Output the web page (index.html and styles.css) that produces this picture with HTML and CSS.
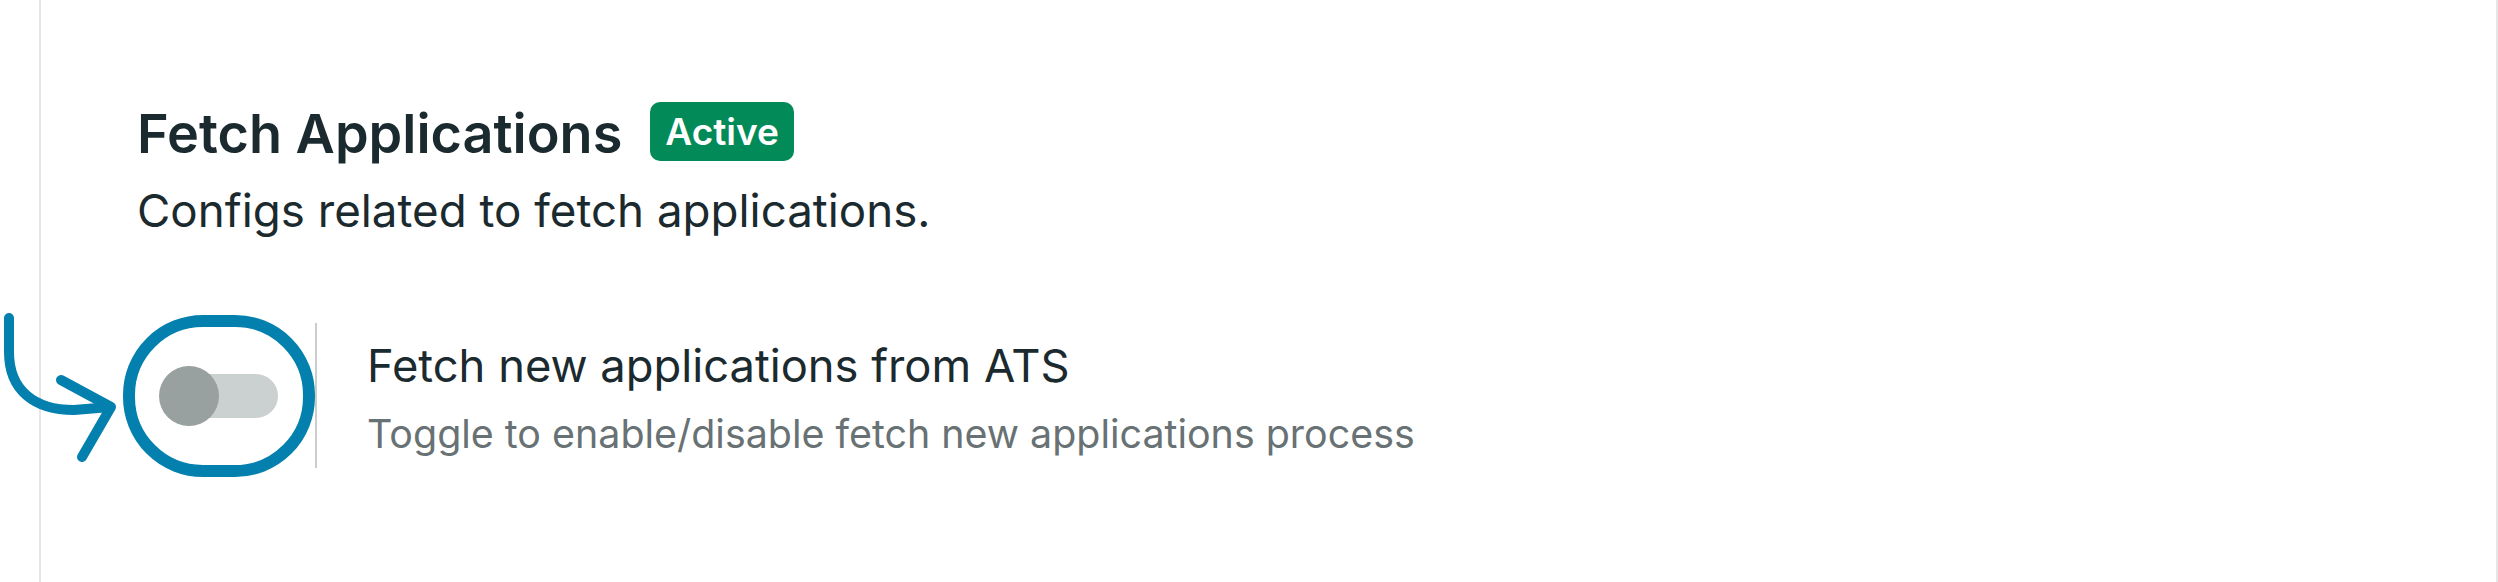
FILE: index.html
```html
<!DOCTYPE html>
<html lang="en">
<head>
<meta charset="utf-8">
<title>Fetch Applications</title>
<link rel="stylesheet" href="styles.css">
</head>
<body>
<main class="panel">
  <section class="section">
    <div class="section-head">
      <h1 class="section-title">Fetch Applications</h1>
      <span class="badge">Active</span>
    </div>
    <p class="section-sub">Configs related to fetch applications.</p>

    <div class="setting">
      <div class="switch-cell">
        <svg class="arrow" viewBox="0 0 125 160" width="125" height="160" aria-hidden="true">
          <path d="M9 8 V42 C9 80 34 100 74 100 L110 97" fill="none" stroke="#0480ae" stroke-width="10" stroke-linecap="round" stroke-linejoin="round"/>
          <path d="M61 70 L111 97 L82 147" fill="none" stroke="#0480ae" stroke-width="10" stroke-linecap="round" stroke-linejoin="round"/>
        </svg>
        <span class="ring" aria-hidden="true"></span>
        <span class="switch" role="switch" aria-checked="false"><span class="knob"></span></span>
      </div>
      <div class="setting-text">
        <div class="setting-title">Fetch new applications from ATS</div>
        <div class="setting-desc">Toggle to enable/disable fetch new applications process</div>
      </div>
    </div>
  </section>
</main>
</body>
</html>
```
FILE: styles.css
```css
* { box-sizing: border-box; }
html, body { margin: 0; padding: 0; background: #ffffff; }
body {
  font-family: Inter, "Noto Sans", "Liberation Sans", sans-serif;
  color: #1b2a2e;
  overflow: hidden;
}
.panel {
  margin-left: 39px;
  height: 582px;
  border-left: 2px solid #e6e6e6;
  border-right: 2px solid #e6e6e6;
}
.section {
  padding: 97px 0 0 96px;
}
.section-head {
  display: flex;
  align-items: center;
  gap: 28px;
}
.section-title {
  margin: 0;
  padding-top: 5px;
  font-size: 54px;
  line-height: 64px;
  font-weight: 600;
  color: #1b2a2e;
}
.badge {
  display: inline-flex;
  align-items: center;
  height: 59px;
  padding: 0 15px;
  border-radius: 10px;
  background: #028a58;
  color: #ffffff;
  font-size: 37px;
  font-weight: 600;
}
.section-sub {
  margin: 13px 0 0;
  font-size: 45.7px;
  line-height: 64px;
  color: #1b2a2e;
}
.setting {
  margin-top: 80px;
  display: flex;
  align-items: center;
}
.switch-cell {
  position: relative;
  height: 145px;
  padding: 0 37px 0 23px;
  border-right: 2px solid #cccccc;
  display: flex;
  align-items: center;
}
.switch {
  position: relative;
  width: 118px;
  height: 44px;
  border-radius: 22px;
  background: #cbd0d0;
  display: flex;
  align-items: center;
}
.knob {
  display: block;
  width: 60px;
  height: 60px;
  margin-left: -1px;
  border-radius: 50%;
  background: #99a0a0;
}
.ring {
  position: absolute;
  left: -14px;
  top: -8px;
  width: 192px;
  height: 162px;
  border: 12px solid #0480ae;
  border-radius: 80px;
}
.arrow {
  position: absolute;
  left: -137px;
  top: -13px;
}
.setting-text {
  padding-left: 50px;
  padding-top: 5px;
  display: flex;
  flex-direction: column;
  gap: 15px;
}
.setting-title {
  font-size: 45.3px;
  line-height: 56px;
  color: #1b2a2e;
}
.setting-desc {
  font-size: 39.4px;
  line-height: 50px;
  color: #687173;
}
```
